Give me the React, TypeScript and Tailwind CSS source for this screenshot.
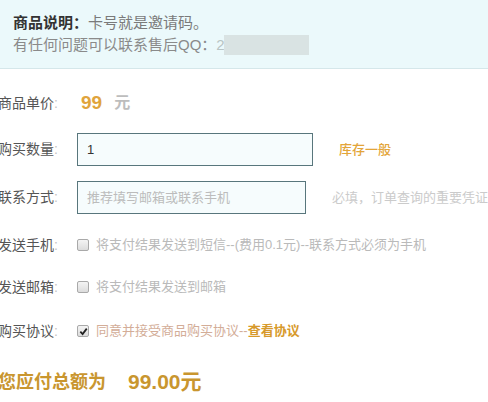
import React from "react";

const font = {
  fontFamily: '"Liberation Sans", "Noto Sans CJK SC", sans-serif',
};

function Label({ text }: { text: string }) {
  return (
    <div className="w-[79px] shrink-0 text-[14px] text-[#555]">
      {text}
      <span className="text-[#c4c4c4]">:</span>
    </div>
  );
}

function Box({ checked }: { checked?: boolean }) {
  return (
    <span className="flex h-[12px] w-[12px] shrink-0 items-center justify-center rounded-[2px] border border-[#a9a9a9] bg-gradient-to-b from-[#f4f4f4] to-[#dcdcdc]">
      {checked ? (
        <svg viewBox="0 0 10 10" className="h-[9px] w-[9px]">
          <path
            d="M1.5 5.2 L4 7.8 L8.6 1.8"
            fill="none"
            stroke="#222"
            strokeWidth="2"
          />
        </svg>
      ) : null}
    </span>
  );
}

export default function App() {
  return (
    <div
      className="h-[402px] w-[488px] overflow-hidden bg-white"
      style={font}
    >
      <header className="h-[69px] border-b border-[#d5e7ea] bg-[#ebf9fb] pl-[13px] pt-[12px] text-[15px] leading-[22px]">
        <p>
          <span className="font-bold text-[#333]">商品说明：</span>
          <span className="text-[#7a7a7a]">卡号就是邀请码。</span>
        </p>
        <p className="flex items-center text-[#8a8a8a]">
          有任何问题可以联系售后QQ：
          <span className="text-[#b8c4c4]">2</span>
          <span className="ml-[-1px] h-[20px] w-[85px] bg-[#d9e3e3]" />
        </p>
      </header>

      <div className="ml-[-2px] whitespace-nowrap">
        <div className="mt-[18px] flex h-[32px] items-center">
          <Label text="商品单价" />
          <span className="ml-[4px] text-[19px] font-bold text-[#e0a43c]">
            99
          </span>
          <span className="ml-[12px] text-[16px] font-bold text-[#bdbdbd]">
            元
          </span>
        </div>

        <div className="mt-[14px] flex h-[33px] items-center">
          <Label text="购买数量" />
          <div className="flex h-[33px] w-[236px] items-center border border-[#58767c] bg-[#f6fcfd] pl-[9px] text-[13px] text-[#333]">
            1
          </div>
          <span className="ml-[26px] text-[13px] font-medium text-[#e3a53a]">
            库存一般
          </span>
        </div>

        <div className="mt-[15px] flex h-[33px] items-center">
          <Label text="联系方式" />
          <div className="flex h-[33px] w-[236px] items-center border border-[#58767c] bg-[#f6fcfd] pl-[9px] text-[13px] text-[#bcbcbc]">
            推荐填写邮箱或联系手机
          </div>
          <span className="ml-[26px] text-[13px] text-[#cbcbcb]">
            必填，订单查询的重要凭证
          </span>
        </div>

        <div className="mt-[21px] flex h-[20px] items-center">
          <Label text="发送手机" />
          <Box />
          <span className="ml-[7px] text-[13px] text-[#bababa]">
            将支付结果发送到短信--(费用0.1元)--联系方式必须为手机
          </span>
        </div>

        <div className="mt-[22px] flex h-[20px] items-center">
          <Label text="发送邮箱" />
          <Box />
          <span className="ml-[7px] text-[13px] text-[#bababa]">
            将支付结果发送到邮箱
          </span>
        </div>

        <div className="mt-[24px] flex h-[20px] items-center">
          <Label text="购买协议" />
          <Box checked />
          <span className="ml-[7px] text-[13px] text-[#d3ad98]">
            同意并接受商品购买协议--
            <span className="font-bold text-[#d79a2c]">查看协议</span>
          </span>
        </div>

        <div className="mt-[28px] flex h-[26px] items-center font-bold text-[#c9962f]">
          <span className="text-[18px]">您应付总额为</span>
          <span className="ml-[22px] text-[21px]">99.00元</span>
        </div>
      </div>
    </div>
  );
}
